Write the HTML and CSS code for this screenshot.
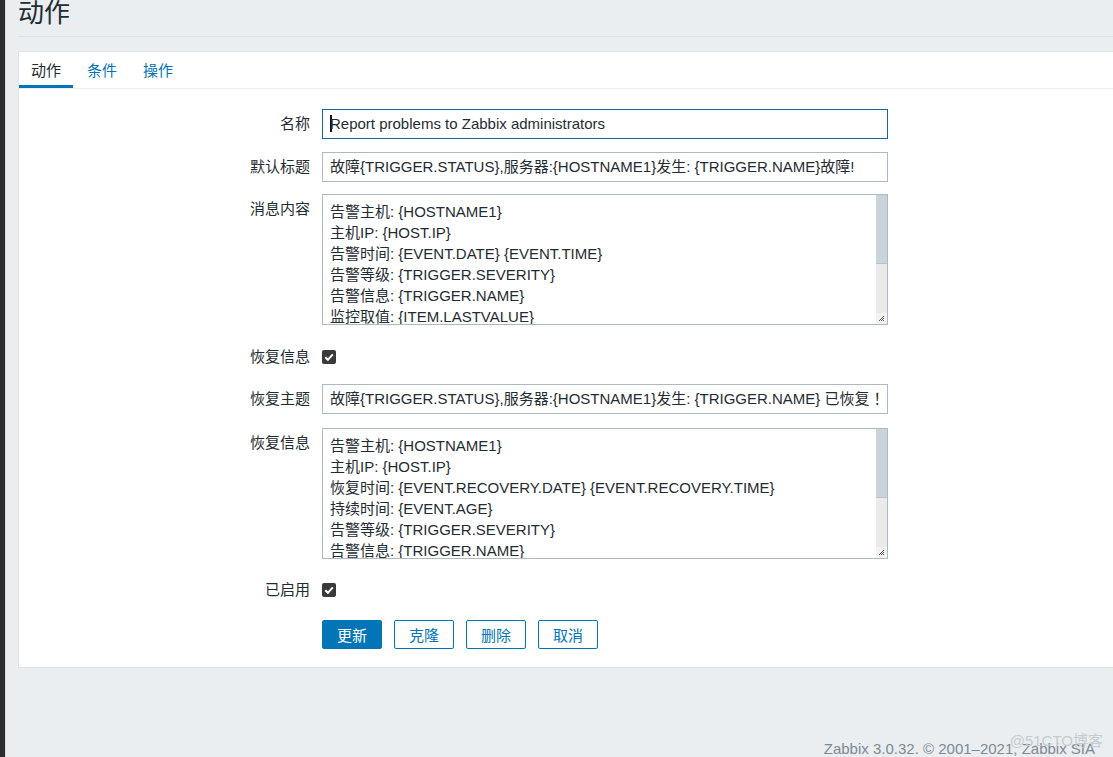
FILE: index.html
```html
<!DOCTYPE html>
<html lang="zh">
<head>
<meta charset="utf-8">
<title>动作</title>
<link rel="stylesheet" href="styles.css">
</head>
<body>
<div class="app">
  <div class="strip"></div>
  <div class="main">
    <header class="page-header">
      <h1 class="page-title">动作</h1>
    </header>
    <section class="panel">
      <nav class="tabs">
        <a class="tab active">动作</a>
        <a class="tab">条件</a>
        <a class="tab">操作</a>
      </nav>
      <div class="form">
        <div class="row row-input gap-13">
          <label class="lbl">名称</label>
          <div class="field input focused"><span class="caret"></span>Report problems to Zabbix administrators</div>
        </div>
        <div class="row row-input gap-12">
          <label class="lbl">默认标题</label>
          <div class="field input">故障{TRIGGER.STATUS},服务器:{HOSTNAME1}发生: {TRIGGER.NAME}故障!</div>
        </div>
        <div class="row row-input gap-20">
          <label class="lbl">消息内容</label>
          <div class="field textarea">
            <div class="ta-text">告警主机: {HOSTNAME1}<br>主机IP: {HOST.IP}<br>告警时间: {EVENT.DATE} {EVENT.TIME}<br>告警等级: {TRIGGER.SEVERITY}<br>告警信息: {TRIGGER.NAME}<br>监控取值: {ITEM.LASTVALUE}<br>问题详情: {ITEM.NAME}: {ITEM.VALUE}</div>
            <div class="scrollbar">
              <div class="thumb"></div>
              <div class="track"></div>
              <div class="grip"><svg width="9" height="9" viewBox="0 0 9 9"><path d="M2 7 L7 2 M4 7 L7 4 M6 7 L7 6" stroke="#555" stroke-width="1" fill="none"/></svg></div>
            </div>
          </div>
        </div>
        <div class="row row-check gap-15">
          <label class="lbl">恢复信息</label>
          <div class="check"><svg width="14" height="14" viewBox="0 0 14 14"><rect width="14" height="14" rx="2" fill="#3a3a3a"/><path d="M3.3 7.2 L5.9 9.8 L10.8 4.3" stroke="#fff" stroke-width="2" fill="none"/></svg></div>
        </div>
        <div class="row row-input gap-14">
          <label class="lbl">恢复主题</label>
          <div class="field input">故障{TRIGGER.STATUS},服务器:{HOSTNAME1}发生: {TRIGGER.NAME} 已恢复<span class="fw">！</span></div>
        </div>
        <div class="row row-input gap-19">
          <label class="lbl">恢复信息</label>
          <div class="field textarea">
            <div class="ta-text">告警主机: {HOSTNAME1}<br>主机IP: {HOST.IP}<br>恢复时间: {EVENT.RECOVERY.DATE} {EVENT.RECOVERY.TIME}<br>持续时间: {EVENT.AGE}<br>告警等级: {TRIGGER.SEVERITY}<br>告警信息: {TRIGGER.NAME}<br>监控取值: {ITEM.LASTVALUE}</div>
            <div class="scrollbar">
              <div class="thumb"></div>
              <div class="track"></div>
              <div class="grip"><svg width="9" height="9" viewBox="0 0 9 9"><path d="M2 7 L7 2 M4 7 L7 4 M6 7 L7 6" stroke="#555" stroke-width="1" fill="none"/></svg></div>
            </div>
          </div>
        </div>
        <div class="row row-check gap-18">
          <label class="lbl">已启用</label>
          <div class="check"><svg width="14" height="14" viewBox="0 0 14 14"><rect width="14" height="14" rx="2" fill="#3a3a3a"/><path d="M3.3 7.2 L5.9 9.8 L10.8 4.3" stroke="#fff" stroke-width="2" fill="none"/></svg></div>
        </div>
        <div class="row row-buttons">
          <span class="lbl"></span>
          <div class="buttons">
            <button class="btn primary">更新</button>
            <button class="btn">克隆</button>
            <button class="btn">删除</button>
            <button class="btn">取消</button>
          </div>
        </div>
      </div>
    </section>
    <footer class="footer">Zabbix 3.0.32. © 2001–2021, Zabbix SIA</footer>
  </div>
</div>
<div class="watermark">@51CTO博客</div>
</body>
</html>
```
FILE: styles.css
```css
html, body {
  margin: 0;
  padding: 0;
  height: 100%;
  overflow: hidden;
}
body {
  background: #ebeef0;
  font-family: "Liberation Sans", Arial, "Noto Sans CJK SC", sans-serif;
  font-size: 15px;
  color: #1f2c33;
}
.app {
  display: flex;
  min-height: 757px;
}
.strip {
  width: 5px;
  flex: none;
  background: #2d2d2d;
  border-right: 1px solid #d6dadd;
}
.main {
  flex: 1;
  padding-left: 12px;
  display: flex;
  flex-direction: column;
}
.page-header {
  border-bottom: 1px solid #dde2e5;
  padding-bottom: 12px;
}
.page-title {
  margin: -3px 0 0 0;
  font-size: 26px;
  line-height: 27px;
  font-weight: normal;
  color: #1f2c33;
  font-family: "Noto Sans CJK SC", sans-serif;
}
.panel {
  margin-top: 14px;
  background: #fff;
  border: 1px solid #dfe4e7;
  border-right: none;
  padding-bottom: 18px;
}
.tabs {
  display: flex;
  gap: 2px;
  height: 36px;
  border-bottom: 1px solid #ebeef0;
}
.tab {
  padding: 0 12px;
  color: #0275b8;
  font-family: "Noto Sans CJK SC", sans-serif;
  font-size: 15px;
  border-bottom: 3px solid transparent;
  height: 33px;
  line-height: 35px;
}
.tab.active {
  color: #1f2c33;
  border-bottom-color: #0275b8;
}
.form {
  padding-top: 20px;
  display: flex;
  flex-direction: column;
}
.row {
  display: grid;
  grid-template-columns: 291px 566px;
  column-gap: 12px;
  align-items: start;
}
.gap-12 { margin-bottom: 12px; }
.gap-13 { margin-bottom: 13px; }
.gap-14 { margin-bottom: 14px; }
.gap-15 { margin-bottom: 15px; }
.gap-18 { margin-bottom: 18px; }
.gap-19 { margin-bottom: 19px; }
.gap-20 { margin-bottom: 20px; }
.lbl {
  text-align: right;
  line-height: 30px;
  font-family: "Liberation Sans", "Noto Sans CJK SC", sans-serif;
}
.row-check {
  height: 24px;
  align-items: center;
}
.row-check .lbl { line-height: 24px; }
.check {
  height: 14px;
  display: flex;
}
.field {
  box-sizing: border-box;
  border: 1px solid #acbbc2;
  background: #fff;
  font-family: "Liberation Sans", "Noto Sans CJK SC", sans-serif;
}
.input {
  height: 30px;
  line-height: 28px;
  padding: 0 7px;
  white-space: nowrap;
  overflow: hidden;
}
.input.focused {
  border-color: #1a66a3;
}
.fw {
  padding-left: 4px;
}
.caret {
  display: inline-block;
  width: 2px;
  height: 17px;
  background: #111;
  vertical-align: -3px;
  margin-right: -2px;
}
.textarea {
  height: 131px;
  display: flex;
  overflow: hidden;
}
.ta-text {
  flex: 1;
  padding: 6px 7px 0;
  line-height: 21px;
  white-space: nowrap;
  overflow: hidden;
}
.scrollbar {
  width: 11px;
  flex: none;
  display: flex;
  flex-direction: column;
  background: #eaeaea;
}
.thumb {
  height: 68px;
  background: #c9d3d9;
  border-bottom: 1px solid #b9c4ca;
}
.track { flex: 1; }
.grip {
  height: 11px;
  display: flex;
  align-items: center;
  justify-content: center;
  background: #f2f2f2;
}
.row-buttons { align-items: center; }
.buttons {
  display: flex;
  gap: 12px;
}
.btn {
  box-sizing: border-box;
  width: 60px;
  height: 29px;
  border: 1px solid #0275b8;
  border-radius: 2px;
  background: #fff;
  color: #0275b8;
  font-family: "Noto Sans CJK SC", sans-serif;
  font-size: 15px;
  padding: 0;
  line-height: 27px;
}
.btn.primary {
  background: #0275b8;
  color: #fff;
}
.footer {
  margin-top: 72px;
  text-align: right;
  padding-right: 18px;
  color: #7b8a96;
  font-size: 15px;
  line-height: 18px;
}
.watermark {
  position: absolute;
  right: 10px;
  top: 729px;
  color: #c6ccd1;
  font-size: 15px;
  font-family: "Liberation Sans", "Noto Sans CJK SC", sans-serif;
}
```
